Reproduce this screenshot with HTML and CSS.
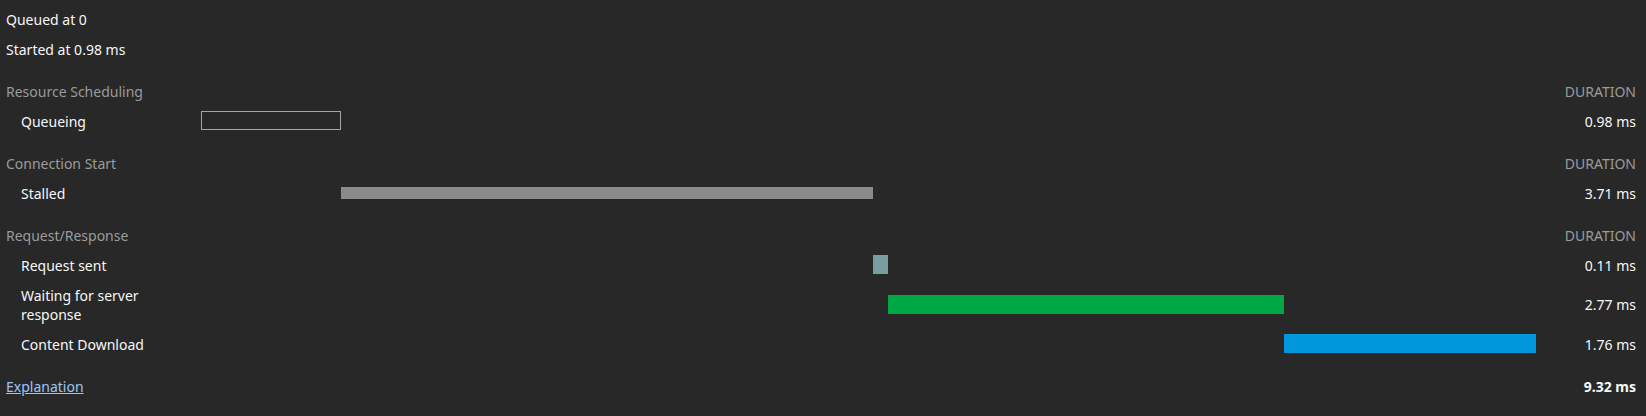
FILE: index.html
```html
<!DOCTYPE html>
<html lang="en">
<head>
<meta charset="utf-8">
<title>Timing</title>
<link rel="stylesheet" href="styles.css">
</head>
<body>
<div class="timing">
  <div class="row info"><div class="info-text">Queued at 0</div></div>
  <div class="row info"><div class="info-text">Started at 0.98 ms</div></div>

  <div class="row header">
    <div class="label">Resource Scheduling</div>
    <div class="track"></div>
    <div class="dur">DURATION</div>
  </div>
  <div class="row">
    <div class="label sub">Queueing</div>
    <div class="track"><div class="bar queueing" style="margin-left:0%;width:10.487%"></div></div>
    <div class="dur">0.98 ms</div>
  </div>

  <div class="row header">
    <div class="label">Connection Start</div>
    <div class="track"></div>
    <div class="dur">DURATION</div>
  </div>
  <div class="row">
    <div class="label sub">Stalled</div>
    <div class="track"><div class="bar stalled" style="margin-left:10.487%;width:39.850%"></div></div>
    <div class="dur">3.71 ms</div>
  </div>

  <div class="row header">
    <div class="label">Request/Response</div>
    <div class="track"></div>
    <div class="dur">DURATION</div>
  </div>
  <div class="row">
    <div class="label sub">Request sent</div>
    <div class="track"><div class="bar sending" style="margin-left:50.337%;width:1.124%"></div></div>
    <div class="dur">0.11 ms</div>
  </div>
  <div class="row">
    <div class="label sub">Waiting for server response</div>
    <div class="track"><div class="bar waiting" style="margin-left:51.461%;width:29.663%"></div></div>
    <div class="dur">2.77 ms</div>
  </div>
  <div class="row">
    <div class="label sub">Content Download</div>
    <div class="track"><div class="bar download" style="margin-left:81.124%;width:18.876%"></div></div>
    <div class="dur">1.76 ms</div>
  </div>

  <div class="row footer">
    <div class="label"><a class="link" href="#">Explanation</a></div>
    <div class="track"></div>
    <div class="dur total">9.32 ms</div>
  </div>
</div>
</body>
</html>
```

FILE: styles.css
```css
html, body {
  margin: 0;
  padding: 0;
  background: #282828;
}

body {
  font-family: "Noto Sans", "Open Sans", sans-serif;
  font-size: 14px;
  line-height: 19px;
  color: #f7f7f7;
}

.timing {
  padding: 4px 10px 0 6px;
}

.row {
  display: grid;
  grid-template-columns: 195px 1fr 100px;
  align-items: center;
  min-height: 30px;
  padding: 5.5px 0;
  box-sizing: border-box;
}

.row.info {
  display: flex;
}

.row.header,
.row.footer {
  margin-top: 12px;
}

.header .label,
.header .dur {
  color: #9b9b9b;
}

.label {
  padding-right: 20px;
}

.label.sub {
  padding-left: 15px;
}

.track {
  display: flex;
  align-items: center;
  margin-top: -1px;
}

.dur {
  text-align: right;
  white-space: nowrap;
}

.total {
  font-weight: 700;
}

.bar {
  height: 19px;
  box-sizing: border-box;
  flex: none;
}

.bar.queueing {
  border: 1px solid #a3a7ab;
  background: transparent;
}

.bar.stalled {
  height: 12px;
  background: #8a8a8a;
}

.bar.sending {
  background: #7a9e9f;
}

.bar.waiting {
  background: #00a845;
}

.bar.download {
  background: #0097dc;
}

.link {
  color: #9cc5f7;
  text-decoration: underline;
}
```
